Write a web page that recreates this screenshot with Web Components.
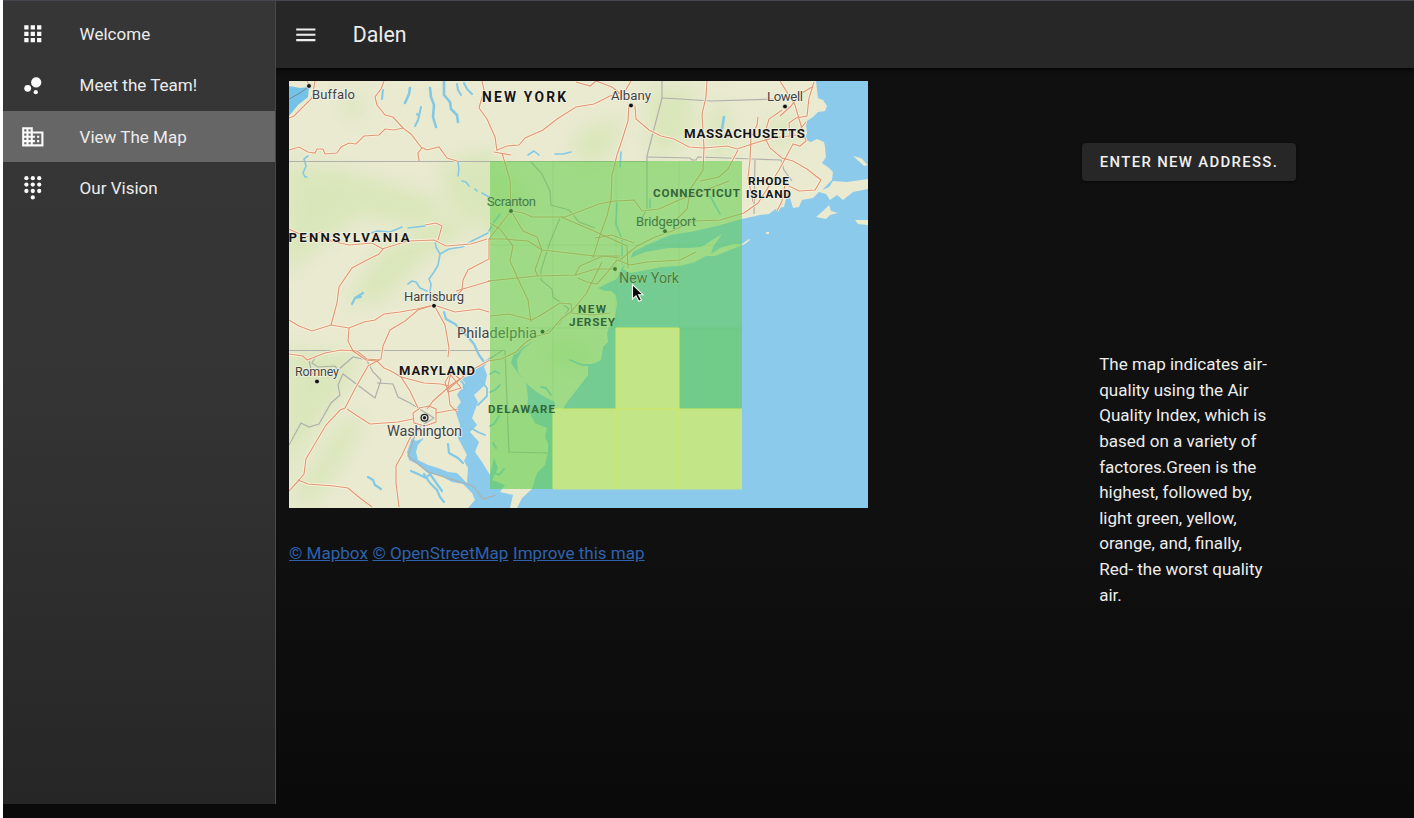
<!DOCTYPE html>
<html lang="en"><head><meta charset="utf-8"><title>Dalen</title>
<style>
html,body{margin:0;height:100%;overflow:hidden;background:#0f0f0f;font-family:Roboto,sans-serif}
</style></head><body>
<dalen-app>
  <side-nav slot="nav">
    <nav-item icon="apps">Welcome</nav-item>
    <nav-item icon="bubbles">Meet the Team!</nav-item>
    <nav-item icon="domain" active>View The Map</nav-item>
    <nav-item icon="dialpad">Our Vision</nav-item>
  </side-nav>
  <app-bar slot="bar">Dalen</app-bar>
  <map-panel slot="map"></map-panel>
  <info-panel slot="info"><action-button slot="action">ENTER NEW ADDRESS.</action-button>The map indicates air-<br>quality using the Air<br>Quality Index, which is<br>based on a variety of<br>factores.Green is the<br>highest, followed by,<br>light green, yellow,<br>orange, and, finally,<br>Red- the worst quality<br>air.</info-panel>
</dalen-app>
<script>
const define=(name,html,setup)=>customElements.define(name,class extends HTMLElement{
  constructor(){super();this.attachShadow({mode:'open'}).innerHTML=html;}
  connectedCallback(){if(setup)setup(this);}
});

define('dalen-app',`<style>
:host{display:grid;grid-template-columns:273px 1fr;width:1414px;height:818px;box-sizing:border-box;border-left:3px solid #fff;background:linear-gradient(#101010 0,#101010 65%,#0a0a0a 100%)}
.right{display:flex;flex-direction:column;min-width:0;overflow:hidden}
.content{display:flex;padding:13px 0 0 13px}
</style><slot name="nav"></slot><div class="right"><slot name="bar"></slot><div class="content"><slot name="map"></slot><slot name="info"></slot></div></div>`);

define('side-nav',`<style>
:host{display:block;box-sizing:border-box;height:804px;padding-top:7.7px;border-top:1px solid #44484e;border-right:1px solid #484848;background:linear-gradient(#363636 0,#353535 45%,#262626 100%)}
</style><slot></slot>`);

const icons={
apps:'<path d="M4 8h4V4H4zm6 12h4v-4h-4zm-6 0h4v-4H4zm0-6h4v-4H4zm6 0h4v-4h-4zm6-10v4h4V4zm-6 4h4V4h-4zm6 6h4v-4h-4zm0 6h4v-4h-4z"/>',
bubbles:'<circle cx="7.2" cy="14.4" r="3.2"/><circle cx="14.8" cy="18" r="2"/><circle cx="15.2" cy="8.8" r="4.8"/>',
domain:'<path d="M12 7V3H2v18h20V7zM6 19H4v-2h2zm0-4H4v-2h2zm0-4H4V9h2zm0-4H4V5h2zm4 12H8v-2h2zm0-4H8v-2h2zm0-4H8V9h2zm0-4H8V5h2zm10 12h-8v-2h2v-2h-2v-2h2v-2h-2V9h8zm-2-8h-2v2h2zm0 4h-2v2h2z"/>',
dialpad:[[6,3],[12,3],[18,3],[6,9],[12,9],[18,9],[6,15],[12,15],[18,15],[12,21]].map(([x,y])=>`<circle cx="${x}" cy="${y}" r="2"/>`).join('')};
define('nav-item',`<style>
:host{display:flex;align-items:center;height:51.2px;padding-left:17px;font-size:17.05px;color:#ececec}
:host([active]){background:#666}
svg{width:25.6px;height:25.6px;fill:#fafafa;margin-right:34px}
</style><svg viewBox="0 0 24 24"></svg><slot></slot>`,e=>{e.shadowRoot.querySelector('svg').innerHTML=icons[e.getAttribute('icon')];});

define('app-bar',`<style>
:host{display:flex;align-items:center;box-sizing:border-box;height:68px;padding-left:17px;border-top:1px solid #44484e;background:#272727;color:#ececec;font-size:21.3px;box-shadow:0 2px 4px #050505}
svg{width:25.6px;height:25.6px;fill:#eee;margin-right:34.2px}
</style><svg viewBox="0 0 24 24"><path d="M3 18h18v-2H3zm0-5h18v-2H3zm0-7v2h18V6z"/></svg><slot></slot>`);

define('action-button',`<style>
:host{display:flex;align-items:center;justify-content:center;box-sizing:border-box;width:214px;height:38.5px;border-radius:4px;background:#272727;color:#f0f0f0;font-weight:500;font-size:14.9px;line-height:20px;white-space:nowrap;letter-spacing:1.33px;box-shadow:0 1px 3px #080808}
</style><slot></slot>`);

define('info-panel',`<style>
:host{display:block;margin-left:214px;padding-top:61.5px}
p{margin:171px 0 0 17.2px;font-size:17.05px;line-height:25.62px;color:#ededed;white-space:nowrap}
</style><slot name="action"></slot><p><slot></slot></p>`);

define('map-links',`<style>
:host{display:flex;gap:4.6px;margin-top:34px;font-size:17.05px;line-height:22px;white-space:nowrap}
a{color:#2e62ad;text-decoration:underline}
</style><a>© Mapbox</a><a>© OpenStreetMap</a><a>Improve this map</a>`);
define('map-panel',`<style>:host{display:block;width:579px}</style><air-map></air-map><map-links></map-links>`);

/* label: text, left x, baseline, width, size, kind */
const T=(s,x,y,w,z,k='c')=>`<text class="${k}" x="${x}" y="${y+.1}" textLength="${w}" font-size="${z}">${s}</text>`;
const D=(x,y)=>`<circle cx="${x}" cy="${y}" r="2.4" fill="#111" stroke="#f5f5e6" stroke-width=".8"/>`;
const roads=[
'M289 150L299 147 308 152 315 153 317 149 323 149 325 154 337 153 341 147 349 143 356 144 364 136 379 135 385 129 394 130 403 128 411 134 421 147 427 150 439 147 447 158 457 161',
'M384 81L381 89 375 97 377 105 385 115 393 117 403 128','M422 148L418 153 419 161','M482 81L484 90 479 108 487 119 495 137 497 151','M289 118L294 116 312 98 315 81','M307 81L310 87',
'M497 150L507 146 519 145 525 138 543 130 557 119 576 107 594 104 610 96 625 91 631 81','M494 152L511 155','M576 82L590 86 596 81 612 87 627 99','M502 153L510 180 511 211',
'M629 105L628 121 623 137 617 155 612 175 611 200 607 216 599 238 593 258','M635 106L636 119 649 130 661 136 674 139 689 147 704 148 727 146 737 149 752 144 769 139 781 137 797 135 801 128 806 122',
'M707 81L706 97 702 114 704 148 703 170 691 188 687 209 674 222','M780 81L795 105 799 119 806 141 800 146 793 144 786 157 779 170 771 183 758 203 744 213 720 220 693 221 672 231 655 237 637 246 620 260',
'M814 82L809 98 807 116 796 118 789 123 790 135','M782 110L769 119 764 136 770 148 782 158 793 161 807 169 821 180 815 190 799 191 785 184 782 201 777 211','M812 87L802 93 790 107 780 116','M758 117L757 125 751 137 750 160 748 178 753 202','M738 150L728 169 719 177 700 181',
'M512 211L523 213 532 217 565 217 599 204 615 201 634 200 642 211 659 209 679 200 711 188 729 181',
'M511 211L496 230 489 239 504 239 528 241 542 250 569 253 594 256 620 256','M511 211L523 231 537 237 542 250 535 270 538 276',
'M490 223L500 229 513 246 510 261 519 281 528 300 531 322','M488 281L517 278 537 276 576 275 595 269 615 269','M575 275L580 266 603 256 620 258','M578 278L587 282 597 284 606 274 617 260 630 265 647 262 680 260 696 252','M595 238L612 235 634 243','M561 217L594 231 627 246 628 268',
'M490 316L509 314 532 320 541 315 560 303 571 304 572 311 561 319 549 333 537 336 526 342 516 352 501 359 488 361 470 371 452 386 449 389',
'M571 312L586 294 602 262','M571 313L592 315 610 313',
'M434 305L417 309 400 312 384 314 375 320 364 322 349 328 331 325 312 331 299 326 289 320','M434 305L445 325 449 348 448 357','M434 305L455 312 479 309 489 312','M434 305L418 310 405 321 390 330 383 346 381 359 368 366 356 387 345 408 340 410 326 425 313 447 306 459 304 474 299 480 289 491',
'M331 325L337 303 339 287 352 268 367 260 379 254 383 249 372 243 349 245 331 241 321 232 306 237 289 229','M382 249L408 241 434 240 446 246 471 244 487 239','M438 240L442 226 436 223 425 225','M489 239L489 259 468 270 463 280 462 290 456 296','M456 291L490 281',
'M349 328L348 341 353 351 366 360 377 361 384 368 391 371','M289 354L303 356 307 360 325 353 341 350 357 351 367 359 380 360','M391 371L401 377 410 391 418 408','M401 377L424 383 441 384 448 386 451 372 460 379 451 385 433 401 427 409','M448 388L450 405 457 412','M419 408L429 406 436 409 436 422 425 426 414 423 413 413 420 408','M436 413L458 409','M413 419L398 422 370 424 359 417 347 409',
'M417 427L409 440 402 455 396 466 396 483 399 507','M298 480L308 484 334 486 348 488 360 498 372 507','M450 374L461 388 448 392 445 382z','M462 376L470 371'];
const bor=['M289 161.5H647','M289 350.5H505L509 452 548 453','M662 81V98L647 156V209L639 223','M662 98L680 99 711 101 775 99','M647 157L690 158 692 160 696 160 698 157 754 159 781 160 784 170 792 181','M755 160L754 214','M531 162L542 174 550 191 551 205 569 210 579 222 595 228','M560 218L550 242 541 270 541 280 552 289 553 297 569 309 559 324 544 333','M353 351L367 361 373 372 381 380 375 398 343 374 338 385 340 395 331 403 319 424 309 427 301 423 289 445','M367 360L353 357 346 363 338 370 335 366 318 367 312 363 316 356 309 360 312 374','M377 383L393 384 398 397 410 403 434 418 421 426 415 435 408 456 428 472 473 486 483 499 496 495','M503 350L488 360'];
define('air-map',`<style>
:host{display:block;width:579px;height:427px}
svg{display:block}text{font-family:Roboto,sans-serif;fill:#414342;paint-order:stroke;stroke:#f4f2e5;stroke-width:1.5px}
.s{font-weight:700;fill:#161616}.g{font-weight:700;fill:#33663b;stroke:none}.o{fill:#467c49;stroke:#9cd983;stroke-width:.8px}.road path{fill:none;stroke:#faf1dc;stroke-width:2.8}.road2 path{fill:none;stroke:#df9775;stroke-width:1.15}
.bor path{fill:none;stroke:#afb0ac;stroke-width:1.2}.river{fill:none;stroke:#83c9e6;stroke-linejoin:round;stroke-linecap:round}
</style><svg width="579" height="427" viewBox="289 81 579 427">
<defs><filter id="soft" x="-30%" y="-30%" width="160%" height="160%"><feGaussianBlur stdDeviation="9"/></filter>
<path id="land" d="M289 81H816L818 98 823 100 827 106 825 111 818 112 813 117 807 121 806 125 807 133 805 140 811 142 817 139 824 142 825 147 826 157 822 163 829 168 833 172 832 180 822 190 829 187 833 181 847 182 868 179V189L853 192 843 200 837 195 830 200 826 194 819 192 813 198 802 200 799 207 793 208 790 198 788 190 784 207 777 208 769 214 760 215 742 219 717 226 690 232 670 235 647 245 633 252 629 262 622 267 617 279 608 283 598 288 605 291 611 291 616 295 617 304 615 317 610 325 607 333 608 342 603 347 601 360 595 363 588 365 588 375 582 383 575 392 568 401 562 410 553 412 555 402 545 397 538 393 528 385 518 372 517 360 522 350 535 340 514 353 511 363 517 372 526 382 528 398 527 408 535 423 547 428 545 437 548 443 548 452 545 465 537 473 532 489 522 498 517 508H510L513 495 500 492 505 485 492 480 498 468 494 458 490 475 482 462 475 452 479 442 470 432 477 425 472 418 478 402 474 395 485 385 487 375 484 367 492 356 482 363 475 368 467 368 469 376 461 378 465 383 457 395 461 402 455 410 460 425 458 438 467 455 464 461 468 468 467 483 457 473 448 472 438 468 428 465 418 460 416 452 418 445 424 438 416 441 412 438 407 452 409 460 417 464 428 473 439 475 452 482 463 484 472 493 475 500 468 508H289z"/><clipPath id="lc"><use href="#land"/></clipPath></defs>
<rect x="289" y="81" width="579" height="428" fill="#8bcaeb"/>
<use href="#land" fill="#e9ead0"/>
<g clip-path="url(#lc)"><g filter="url(#soft)" fill="#d5e5b5" opacity=".8"><path d="M286 164L340 170 410 190 450 205 420 225 360 215 320 245 284 275z"/><path d="M382 250L448 216 475 223 420 261 382 300 345 305z"/><path d="M285 350L360 355 340 395 310 435 285 480z"/><path d="M340 425L365 415 350 450 315 502H289z"/><path d="M440 165L490 150 530 202 500 240 450 205z"/><path d="M650 88L695 89 690 137 675 150 650 160z"/><path d="M578 132L623 117 607 159 575 162z"/><ellipse cx="782" cy="132" rx="18" ry="12"/><ellipse cx="353" cy="106" rx="8" ry="12"/><ellipse cx="570" cy="354" rx="22" ry="12"/><ellipse cx="720" cy="135" rx="10" ry="32"/></g></g>
<path d="M289 86L300 88 309 87 308 97 298 105 289 116z" fill="#73c3e9"/><path d="M289 99L300 93 307 88" fill="none" stroke="#7a8790"/>
<path fill="#e9ead0" d="M628 259L645 252 668 248 690 248 701 247 722 234 713 247 711 254 720 248 733 244 742 244 749 239 750 240 745 244 715 256 706 256 695 262 680 266 662 267 647 270 630 273 623 269zM816 217L823 211 829 205 831 211 838 213 830 215 826 219zM853 156L861 158 868 165 864 166zM855 220L868 220V225L858 224zM766 232h3v2h-3z"/>
<g class="river"><path stroke-width="2.6" d="M410 88L409 94 405 103M430 88L431 97 434 105 433 117 436 127M444 81L444 95 450 102 451 109 457 115 458 122M724 117L722 129"/><path stroke-width="2" d="M457 84L458 90 461 95M464 83L467 89 472 94M421 107L419 116 418 120 415 126M419 116L417 114M383 90L382 99"/><path stroke-width="1.6" d="M308 156L304 159 306 166 303 173 305 177 307 177M458 162L459 169 458 176M462 181L466 182 469 186M475 189L477 191M482 193L489 197M440 254L438 265 434 272 429 279 431 284 430 292M435 240L436 247 440 254 449 249 462 247 472 241 488 233M408 284L412 281 416 282 420 288 427 291M367 234L378 231 390 232 402 227M408 228L425 226M528 155L534 151 539 155M555 154L563 154 571 152M621 152L620 167M617 202L616 224 622 239 622 264M650 199L650 209M500 214L494 222 489 231M710 196L720 214"/><path stroke-width="2.2" d="M352 304L355 298 363 293 M355 298L361 297M444 312L446 319 455 324 461 330 468 337 474 344 479 355 484 362M448 444L449 453 458 458 463 463M424 474L430 483 437 490 440 497 444 502M411 471L418 474 426 478 430 474 442 491M368 477L373 480 375 485 381 489"/><path stroke-width="1.8" d="M490 374L495 371 499 373M490 392L495 390 500 385M490 426L494 424 499 416M504 469L499 475 495 473M471 428L478 432 485 435M481 381L487 388 487 396 478 405M460 380L463 383 465 390M493 443L496 448M570 360L582 365 594 365M541 387L546 388 551 395"/></g>
<g class="bor">${bor.map(d=>`<path d="${d}"/>`).join('')}</g>
<g class="road">${roads.map(d=>`<path d="${d}"/>`).join('')}</g><g class="road2">${roads.map(d=>`<path d="${d}"/>`).join('')}</g>
${D(309,86)+D(631,105.5)+D(785,106.5)+D(511,211)+D(665,231.2)+D(615,269)+D(434,305.8)+D(542.5,331.7)+D(317,381.5)}
<circle cx="424.5" cy="417.8" r="3.4" fill="#eee" stroke="#222" stroke-width="1.3"/><circle cx="424.5" cy="417.8" r="1.7" fill="#222"/>
${T('Philadelphia',457,337.8,80,14.5)}
<path fill="rgb(98,205,73)" fill-opacity=".55" d="M490 161H742V409H679V328H616V409H553V489H490z"/>
<path fill="#5fce50" fill-opacity=".12" d="M679 328H742V409H679zM490 409H553V489H490z"/>
<path fill="#c3e685" fill-opacity=".98" d="M616 328H679V409H742V489.5H553V409H616z"/>
<g fill="none" stroke-width="1"><path stroke="#60be50" opacity=".2" d="M490 245H742M553 161V409M616 161V328M679 161V328M490 328H616M679 328H742M490 409H553"/><path stroke="#d0e85f" d="M616 409V489M679 409V489M616 409H679M616 409V328H679V409M553 489V409H616M679 409H742"/></g>
${T('Buffalo',312,99,43,13)+T('Albany',611,99.5,40,13.2)+T('Lowell',767,101,36,13.2)+T('Scranton',487,205.5,49,13,'o')+T('Bridgeport',636,225.5,60,13,'o')+T('New York',619,283,60,14.3,'o')+T('Harrisburg',404,300.5,60,13)+T('Romney',295,376,44,12.5)+T('Washington',387,435.8,75,14.5)}
${T('NEW YORK',482,102,84,13.8,'s')+T('MASSACHUSETTS',684,138.3,121,13.3,'s')+T('RHODE',748,185,41,11.8,'s')+T('ISLAND',746,198.3,45,11.8,'s')+T('CONNECTICUT',653,197,87,11.6,'g')+T('PENNSYLVANIA',288.5,242,121,13.2,'s')+T('NEW',578,313,28,11.8,'g')+T('JERSEY',569,326,46,11.8,'g')+T('MARYLAND',399,375,76,13,'s')+T('DELAWARE',488,413,67,11.4,'g')}
<path d="M632.5 284.5V299L636 295.8 638.8 301.3 641.5 300 638.6 294.7H643z" fill="#080808" stroke="#f4f7ef" stroke-width="1.1"/>
</svg>`);
</script></body></html>
